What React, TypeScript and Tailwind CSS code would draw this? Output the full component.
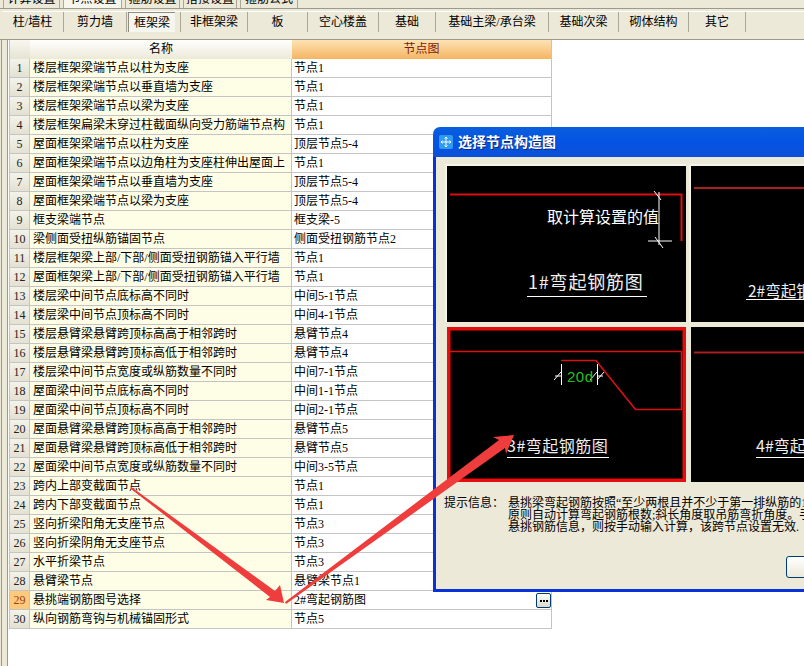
const FONT = '[font-family:"Liberation_Serif","Noto_Sans_CJK_SC",serif]';

const topTabs = [
  { label: "计算设置", w: "w-[57px]", active: false },
  { label: "节点设置", w: "w-[59px]", active: true },
  { label: "箍筋设置", w: "w-[55px]", active: false },
  { label: "搭接设置", w: "w-[54px]", active: false },
  { label: "箍筋公式", w: "w-[58px]", active: false },
];

const subTabs = [
  { label: "柱/墙柱", w: "w-[62px]" },
  { label: "剪力墙", w: "w-[63px]" },
  { label: "框架梁", w: "w-[54px]", active: true },
  { label: "非框架梁", w: "w-[67px]" },
  { label: "板", w: "w-[60px]" },
  { label: "空心楼盖", w: "w-[71px]" },
  { label: "基础", w: "w-[57px]" },
  { label: "基础主梁/承台梁", w: "w-[113px]" },
  { label: "基础次梁", w: "w-[70px]" },
  { label: "砌体结构", w: "w-[70px]" },
  { label: "其它", w: "w-[57px]" },
];

const rows: [string, string][] = [
  ["楼层框架梁端节点以柱为支座", "节点1"],
  ["楼层框架梁端节点以垂直墙为支座", "节点1"],
  ["楼层框架梁端节点以梁为支座", "节点1"],
  ["楼层框架扁梁未穿过柱截面纵向受力筋端节点构", "节点1"],
  ["屋面框架梁端节点以柱为支座", "顶层节点5-4"],
  ["屋面框架梁端节点以边角柱为支座柱伸出屋面上", "节点1"],
  ["屋面框架梁端节点以垂直墙为支座", "顶层节点5-4"],
  ["屋面框架梁端节点以梁为支座", "顶层节点5-4"],
  ["框支梁端节点", "框支梁-5"],
  ["梁侧面受扭纵筋锚固节点", "侧面受扭钢筋节点2"],
  ["楼层框架梁上部/下部/侧面受扭钢筋锚入平行墙", "节点1"],
  ["屋面框架梁上部/下部/侧面受扭钢筋锚入平行墙", "节点1"],
  ["楼层梁中间节点底标高不同时", "中间5-1节点"],
  ["楼层梁中间节点顶标高不同时", "中间4-1节点"],
  ["楼层悬臂梁悬臂跨顶标高高于相邻跨时", "悬臂节点4"],
  ["楼层悬臂梁悬臂跨顶标高低于相邻跨时", "悬臂节点4"],
  ["楼层梁中间节点宽度或纵筋数量不同时", "中间7-1节点"],
  ["屋面梁中间节点底标高不同时", "中间1-1节点"],
  ["屋面梁中间节点顶标高不同时", "中间2-1节点"],
  ["屋面悬臂梁悬臂跨顶标高高于相邻跨时", "悬臂节点5"],
  ["屋面悬臂梁悬臂跨顶标高低于相邻跨时", "悬臂节点5"],
  ["屋面梁中间节点宽度或纵筋数量不同时", "中间3-5节点"],
  ["跨内上部变截面节点", "节点1"],
  ["跨内下部变截面节点", "节点1"],
  ["竖向折梁阳角无支座节点", "节点3"],
  ["竖向折梁阴角无支座节点", "节点3"],
  ["水平折梁节点", "节点3"],
  ["悬臂梁节点", "悬臂梁节点1"],
  ["悬挑端钢筋图号选择", "2#弯起钢筋图"],
  ["纵向钢筋弯钩与机械锚固形式", "节点5"],
];

function Table() {
  return (
    <div className="w-[543px] border-l border-[#c4c4c4]">
      <div className="flex h-[19px] leading-[19px]">
        <div className="w-[20px] bg-gradient-to-b from-[#f8f7f0] to-[#e6e3d3]" />
        <div className="w-[262px] text-center bg-gradient-to-b from-[#ffffff] to-[#ece9d8]">名称</div>
        <div className="w-[260px] text-center text-[#7a1a10] bg-gradient-to-b from-[#fde3b4] to-[#f4b45f] border-r border-[#c4c4c4]">节点图</div>
      </div>
      {rows.map(([name, value], i) => {
        const selected = i === 28;
        return (
          <div key={i} className="flex h-[19px] leading-[18px] border-b border-[#c4c4c4]">
            <div
              className={
                selected
                  ? "w-[20px] text-center text-[#a04010] bg-[#fdc97c] border-r border-[#c4c4c4]"
                  : "w-[20px] text-center text-[#222] bg-gradient-to-b from-[#f4f3ea] to-[#e4e1d2] border-r border-[#c4c4c4]"
              }
            >
              {i + 1}
            </div>
            <div className="w-[262px] pl-[3px] bg-[#fefee6] border-r border-[#c4c4c4] whitespace-nowrap overflow-hidden">{name}</div>
            <div className="w-[260px] pl-[2px] bg-white border-r border-[#c4c4c4] flex items-start justify-between whitespace-nowrap">
              <span>{value}</span>
              {selected && (
                <span className="mt-[2px] w-[15px] h-[15px] rounded-[2px] border border-[#003c74] bg-gradient-to-b from-white to-[#dcd9c8] flex items-center justify-center gap-[1px]">
                  <i className="w-[2px] h-[2px] bg-black" />
                  <i className="w-[2px] h-[2px] bg-black" />
                  <i className="w-[2px] h-[2px] bg-black" />
                </span>
              )}
            </div>
          </div>
        );
      })}
    </div>
  );
}

const RED = "#dc1010";
const svgFont = { fontFamily: '"Noto Sans CJK SC", sans-serif' };

function Cell1() {
  return (
    <svg width="239" height="156" className="block bg-black">
      <path d="M3 28.5H234.5V75" fill="none" stroke={RED} strokeWidth="2" />
      <text x="100" y="57" fill="#fff" fontSize="16" style={svgFont}>取计算设置的值</text>
      <path d="M212 26V79M201 75H225M207 25L214 34M208 71L216 82" stroke="#fff" strokeWidth="1" fill="none" />
      <text x="81" y="123" fill="#eee" fontSize="18" letterSpacing="0.8" style={svgFont}>1#弯起钢筋图</text>
      <path d="M80 130.5H200" stroke="#fff" />
    </svg>
  );
}

function Cell2() {
  return (
    <svg width="239" height="156" className="block bg-black">
      <path d="M3 22H239" stroke="#a82020" strokeWidth="2" />
      <text x="57" y="131" fill="#eee" fontSize="15.5" style={svgFont}>2#弯起钢筋图</text>
      <path d="M55 133.5H239" stroke="#fff" />
    </svg>
  );
}

function Cell3() {
  return (
    <svg width="239" height="155" className="block bg-black">
      <rect x="1.75" y="1.75" width="235.5" height="151.5" fill="none" stroke="#e80c0c" strokeWidth="3.5" />
      <path d="M3 24.5H234.5V82.5H188.5L149 33.5H114" fill="none" stroke={RED} strokeWidth="1.6" />
      <path d="M114.5 37V58M150.5 37V58M107 53L114 45M143 53L150 45M150 53L157 45" stroke="#fff" fill="none" />
      <path d="M108 49H114M151 49H156" stroke="#fff" />
      <text x="120" y="55" fill="#20c020" fontSize="15" style={{ fontFamily: '"Liberation Sans", sans-serif' }} letterSpacing="0.5">20d</text>
      <text x="60" y="125" fill="#eee" fontSize="16" letterSpacing="0.5" style={svgFont}>3#弯起钢筋图</text>
      <path d="M60 130.5H162" stroke="#fff" />
    </svg>
  );
}

function Cell4() {
  return (
    <svg width="239" height="155" className="block bg-black">
      <path d="M3 25.5H239" stroke="#a82020" strokeWidth="2" />
      <text x="65" y="125" fill="#eee" fontSize="16" style={svgFont}>4#弯起钢筋图</text>
      <path d="M65 130.5H239" stroke="#fff" />
    </svg>
  );
}

function Dialog() {
  return (
    <div className="absolute left-[433px] top-[127px] w-[500px] h-[465px] flex flex-col">
      <div className="h-[30px] shrink-0 rounded-t-[7px] bg-gradient-to-b from-[#0a5fdc] via-[#0553e4] to-[#0a50d8] flex items-center pl-[6px] gap-[5px]">
        <svg width="14" height="14" viewBox="0 0 14 14">
          <rect width="14" height="14" rx="2" fill="#2f9bf0" />
          <path d="M7 2V12M2 7H12M5.5 3.5L7 2L8.5 3.5M5.5 10.5L7 12L8.5 10.5M3.5 5.5L2 7L3.5 8.5M10.5 5.5L12 7L10.5 8.5" stroke="#fff" fill="none" />
        </svg>
        <span className="mt-[2px] text-white font-bold text-[14px] leading-none [text-shadow:1px_1px_0_#0a2a80]">选择节点构造图</span>
      </div>
      <div className="flex-1 bg-[#ece9d8] border-l-[3px] border-b-[3px] border-[#0831d9] pl-[9px] pt-[7px]">
        <div className="grid grid-cols-[241px_300px] gap-x-[3px] gap-y-[5px]">
          <div className="border-l-2 border-t-2 border-[#f6f5ec]"><Cell1 /></div>
          <div className="border-l-2 border-t-2 border-[#f6f5ec]"><Cell2 /></div>
          <div className="ml-[2px]"><Cell3 /></div>
          <div className="ml-[2px]"><Cell4 /></div>
        </div>
        <div className="flex mt-[15px] -ml-[1px] leading-[12px] whitespace-nowrap">
          <div className="w-[64px]">提示信息：</div>
          <div>
            <div>悬挑梁弯起钢筋按照“至少两根且并不少于第一排纵筋的1/2”</div>
            <div>原则自动计算弯起钢筋根数;斜长角度取吊筋弯折角度。手</div>
            <div>悬挑钢筋信息，则按手动输入计算，该跨节点设置无效.</div>
          </div>
        </div>
        <div className="mt-[23px] ml-[341px] w-[80px] h-[22px] rounded-[3px] border border-[#003c74] bg-gradient-to-b from-white to-[#ece9d8]" />
      </div>
    </div>
  );
}

export default function App() {
  return (
    <div className={`relative w-[804px] h-[666px] overflow-hidden bg-[#ece9d8] text-[12px] text-black ${FONT}`}>
      <div className="h-[8px] overflow-hidden flex gap-[3px] pl-[3px]">
        {topTabs.map((t) => (
          <div
            key={t.label}
            className={`${t.w} h-[18px] -mt-[10px] shrink-0 leading-[18px] text-center border-x border-[#aca899] ${t.active ? "bg-[#f7f6ee]" : ""}`}
          >
            {t.label}
          </div>
        ))}
      </div>
      <div className="h-[658px] border-t border-[#9c9a8c] flex flex-col">
        <div className="h-[31px] shrink-0 pl-[2px] border-b border-[#9c9a8c] flex flex-col">
          <div className="h-[2px]" />
          <div className="h-[1px] bg-white" />
          <div className="flex h-[20px]">
            {subTabs.map((t) =>
              t.active ? (
                <div key={t.label} className={`${t.w} border-r border-[#aca899] pl-[1px]`}>
                  <div className="w-[47px] h-[20px] leading-[20px] text-center bg-[#f6f5ee] border-l border-t border-[#8f8d80]">{t.label}</div>
                </div>
              ) : (
                <div key={t.label} className={`${t.w} h-[20px] leading-[20px] text-center border-r border-[#aca899] whitespace-nowrap`}>{t.label}</div>
              )
            )}
          </div>
        </div>
        <div className="flex-1 flex ml-[1px]">
          <div className="w-[6px] border-l border-[#9c9a8c]" />
          <div className="flex-1 bg-white border-l border-[#9c9a8c] pl-[1px]">
            <Table />
          </div>
        </div>
      </div>
      <Dialog />
      <svg className="absolute left-0 top-0 pointer-events-none" width="804" height="666">
        <polygon points="130,486 131,489 270,597 266,600 284,603 280,585 275,591" fill="#ef3c3c" />
        <polygon points="514,435 493,437 499,440 285,602 286,604 505,448 506,454" fill="#ef3c3c" />
      </svg>
    </div>
  );
}
